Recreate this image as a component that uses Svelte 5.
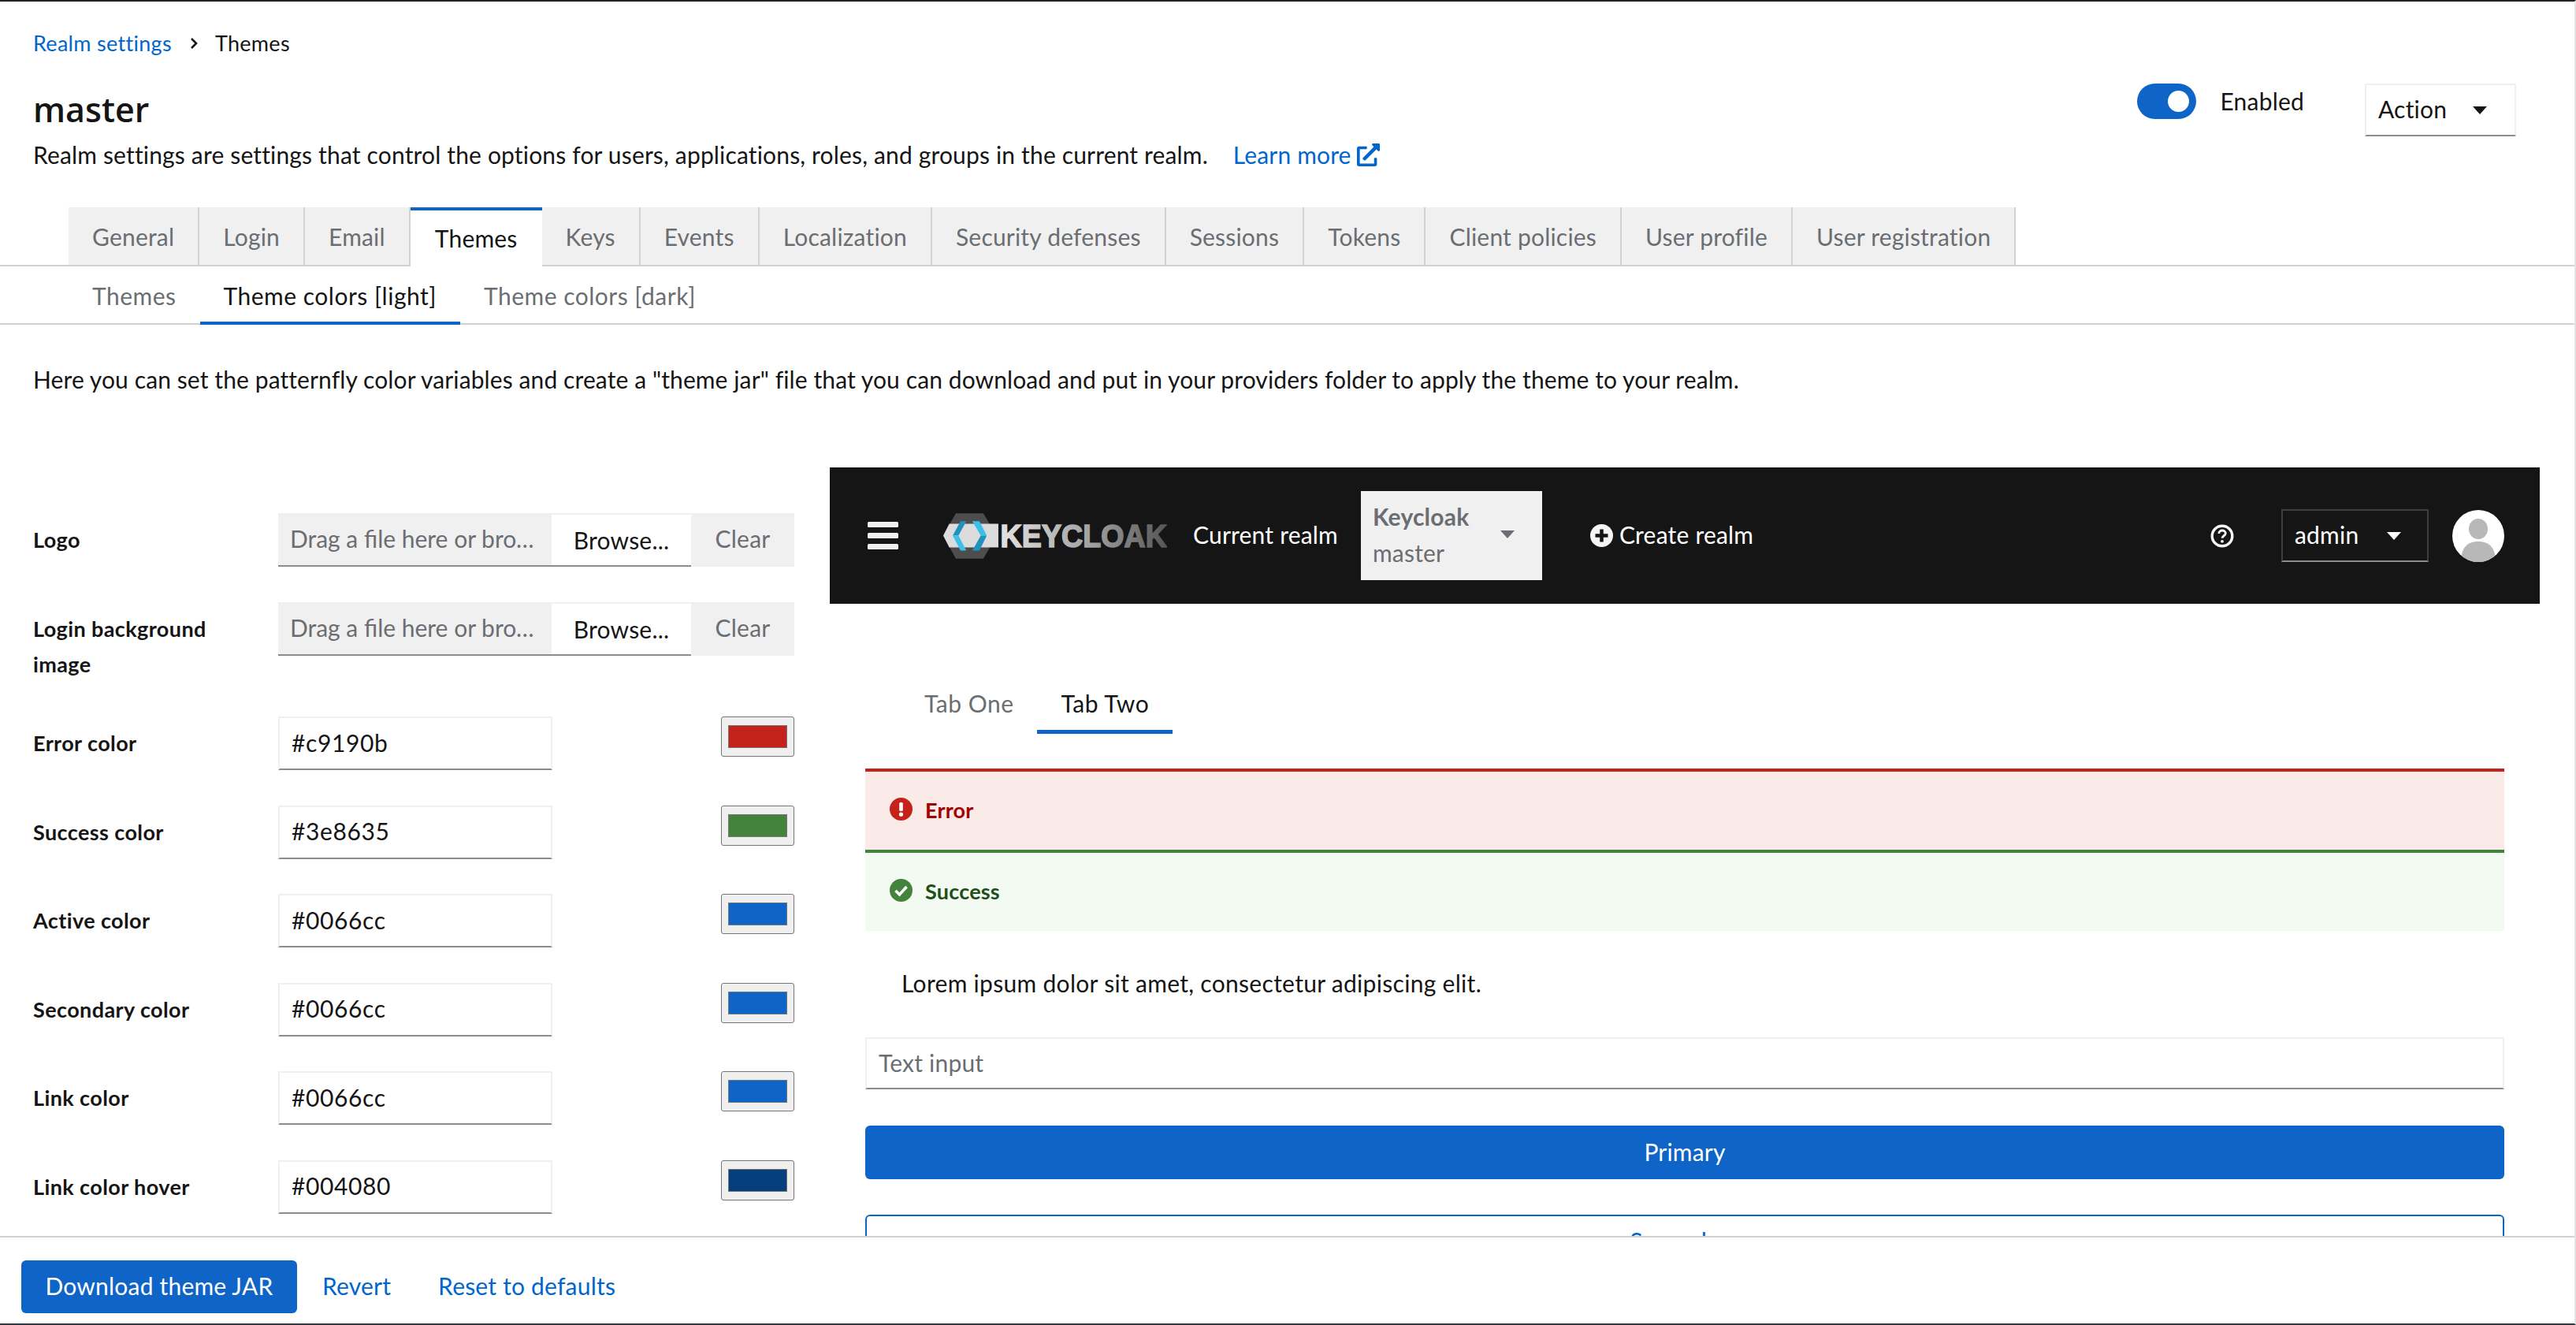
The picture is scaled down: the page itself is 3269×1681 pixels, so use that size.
<script lang="ts">
    const mainTabs = ['General', 'Login', 'Email', 'Themes', 'Keys', 'Events', 'Localization', 'Security defenses', 'Sessions', 'Tokens', 'Client policies', 'User profile', 'User registration']
    const subTabs = ['Themes', 'Theme colors [light]', 'Theme colors [dark]']
    const colors = [
        { label: 'Error color', value: '#c9190b', shown: '#c4221a' },
        { label: 'Success color', value: '#3e8635', shown: '#43833c' },
        { label: 'Active color', value: '#0066cc', shown: '#0e65c7' },
        { label: 'Secondary color', value: '#0066cc', shown: '#0e65c7' },
        { label: 'Link color', value: '#0066cc', shown: '#0e65c7' },
        { label: 'Link color hover', value: '#004080', shown: '#053f7c' },
    ]
    const uploads = ['Logo', 'Login background image']
</script>

<div class="page">
    <main class="content">
        <header class="page-head">
            <div>
                <nav class="crumbs">
                    <a href="#realm">Realm settings</a>
                    <svg class="chev" viewBox="0 0 10 14"><path d="M2 1l6 6-6 6" fill="none" stroke="#151515" stroke-width="2.6" /></svg>
                    <span>Themes</span>
                </nav>
                <h1>master</h1>
                <p class="desc">
                    Realm settings are settings that control the options for users, applications, roles, and groups in the current realm.
                    <a class="learn" href="#learn">Learn more
                        <svg viewBox="0 0 512 512"><path fill="#0066cc" d="M432,320H400a16,16,0,0,0-16,16V448H64V128H208a16,16,0,0,0,16-16V80a16,16,0,0,0-16-16H48A48,48,0,0,0,0,112V464a48,48,0,0,0,48,48H400a48,48,0,0,0,48-48V336A16,16,0,0,0,432,320ZM488,0h-128c-21.37,0-32.05,25.91-17,41l35.73,35.73L135,320.37a24,24,0,0,0,0,34L157.67,377a24,24,0,0,0,34,0L435.28,133.32,471,169c15,15,41,4.5,41-17V24A24,24,0,0,0,488,0Z" /></svg>
                    </a>
                </p>
            </div>
            <div class="head-actions">
                <div class="switch"><span class="track"><span class="knob"></span></span><span class="switch-label">Enabled</span></div>
                <button type="button" class="action"><span class="lift">Action</span> <span class="caret dark"></span></button>
            </div>
        </header>

        <div class="tabs">
            {#each mainTabs as tab (tab)}
                <div class="tab" class:current={tab === 'Themes'}>{tab}</div>
            {/each}
        </div>
        <div class="subtabs">
            {#each subTabs as tab, i (tab)}
                <div class="subtab" class:current={i === 1}>{tab}</div>
            {/each}
        </div>

        <p class="intro">Here you can set the patternfly color variables and create a "theme jar" file that you can download and put in your providers folder to apply the theme to your realm.</p>

        <div class="columns">
            <form class="fields">
                {#each uploads as label (label)}
                    <div class="label">{label}</div>
                    <div class="upload">
                        <span class="drop">Drag a file here or browse to upload</span>
                        <span class="browse">Browse...</span>
                        <span class="clear">Clear</span>
                    </div>
                {/each}
                {#each colors as color, i (i)}
                    <div class="label">{color.label}</div>
                    <div class="color-row">
                        <input class="hex" type="text" value={color.value} />
                        <input class="swatch" type="color" value={color.shown} />
                    </div>
                {/each}
            </form>

            <section class="preview">
                <div class="masthead">
                    <svg class="burger" viewBox="0 0 39 35"><rect width="39" height="7" rx="1.5" fill="#f0f0f0" /><rect y="14" width="39" height="7" rx="1.5" fill="#f0f0f0" /><rect y="28" width="39" height="7" rx="1.5" fill="#f0f0f0" /></svg>
                    <svg class="logo" viewBox="52 70 853 173">
                        <defs>
                            <linearGradient id="kc-text" x1="0" x2="1" y1="0" y2="0"><stop offset="0" stop-color="#e2e2e2" /><stop offset="0.55" stop-color="#a0a0a0" /><stop offset="1" stop-color="#555" /></linearGradient>
                        </defs>
                        <polygon points="100,70 205,70 255,155 205,243 100,243 52,155" fill="#4d4d4d" />
                        <polygon points="52,155 75,110 262,110 262,200 75,200" fill="#dcdcdc" />
                        <polygon points="118,100 140,100 110,155 88,155" fill="#1f93bb" />
                        <polygon points="88,155 110,155 140,212 118,212" fill="#3bc0ea" />
                        <polygon points="163,100 190,100 218,155 195,155" fill="#3bc0ea" />
                        <polygon points="195,155 218,155 190,212 163,212" fill="#1f93bb" />
                        <text x="270" y="200" textLength="635" lengthAdjust="spacingAndGlyphs" font-size="123" font-weight="700" font-family="Liberation Sans, sans-serif" stroke="url(#kc-text)" stroke-width="5" fill="url(#kc-text)">KEYCLOAK</text>
                    </svg>
                    <span class="current-realm lift">Current realm</span>
                    <div class="realm-select">
                        <div><div class="realm-name">Keycloak</div><div class="realm-sub">master</div></div>
                        <span class="caret gray"></span>
                    </div>
                    <span class="create">
                        <svg viewBox="0 0 29 29"><circle cx="14.5" cy="14.5" r="14.5" fill="#f5f5f5" /><path d="M14.5 6.5v16M6.5 14.5h16" stroke="#151515" stroke-width="4.5" /></svg>
                        <span class="lift">Create realm</span>
                    </span>
                    <svg class="help" viewBox="0 0 30 30"><circle cx="15" cy="15" r="12.8" fill="none" stroke="#f5f5f5" stroke-width="3.4" /><path d="M10.8 12c0-2.6 2-4 4.3-4s4.2 1.4 4.2 3.6c0 3.3-4.2 3-4.2 6.2" fill="none" stroke="#f5f5f5" stroke-width="2.8" /><circle cx="15" cy="21.8" r="1.9" fill="#f5f5f5" /></svg>
                    <div class="user"><span class="lift">admin</span><span class="caret white"></span></div>
                    <svg class="avatar" viewBox="0 0 66 66">
                        <clipPath id="av"><circle cx="33" cy="33" r="33" /></clipPath>
                        <g clip-path="url(#av)">
                            <rect width="66" height="66" fill="#fff" />
                            <ellipse cx="33" cy="24" rx="12" ry="13" fill="#b8b8b8" />
                            <path d="M11 66c0-17 7-26 22-26s22 9 22 26z" fill="#b8b8b8" />
                        </g>
                    </svg>
                </div>

                <div class="body">
                    <div class="demo-tabs">
                        <div class="demo-tab">Tab One</div>
                        <div class="demo-tab current">Tab Two</div>
                    </div>
                    <div class="alert error">
                        <svg viewBox="0 0 29 29"><circle cx="14.5" cy="14.5" r="14.5" fill="#c4221a" /><rect x="12.2" y="6" width="4.6" height="11" rx="1.5" fill="#fff" /><circle cx="14.5" cy="21.2" r="2.6" fill="#fff" /></svg>
                        <span class="lift">Error</span>
                    </div>
                    <div class="alert success">
                        <svg viewBox="0 0 29 29"><circle cx="14.5" cy="14.5" r="14.5" fill="#43833c" /><path d="M7.5 15l5 5 9-10" fill="none" stroke="#fff" stroke-width="3.6" /></svg>
                        <span class="lift">Success</span>
                    </div>
                    <p class="lorem">Lorem ipsum dolor sit amet, consectetur adipiscing elit.</p>
                    <input class="text-input" type="text" placeholder="Text input" />
                    <button type="button" class="btn-primary wide">Primary</button>
                    <button type="button" class="btn-secondary wide">Secondary</button>
                </div>
            </section>
        </div>
    </main>

    <footer class="actions">
        <button type="button" class="btn-primary download">Download theme JAR</button>
        <a class="revert" href="#revert">Revert</a>
        <a class="reset" href="#reset">Reset to defaults</a>
    </footer>
</div>

<style>
    :global(body) {
        margin: 0;
        background: #fff;
    }

    .page {
        box-sizing: border-box;
        height: 1681px;
        width: 3269px;
        display: flex;
        flex-direction: column;
        border-top: 2px solid #1f2226;
        border-bottom: 2px solid #2e3b44;
        border-right: 2px solid #e4e4e4;
        font-family: Lato, "Liberation Sans", sans-serif;
        font-size: 30px;
        letter-spacing: 0.2px;
        color: #151515;
        overflow: hidden;
    }

    a {
        color: #0066cc;
        text-decoration: none;
    }

    input,
    button {
        letter-spacing: inherit;
    }

    /* Lato sits a touch lower than the reference face */
    .lift {
        margin-bottom: 3px;
    }

    .content {
        flex: 1;
        min-height: 0;
        overflow: hidden;
    }

    .page-head {
        display: flex;
        justify-content: space-between;
        padding: 33px 74px 0 42px;
    }

    .crumbs {
        display: flex;
        align-items: center;
        font-size: 27px;
        letter-spacing: 0.3px;
        line-height: 40px;
    }

    .chev {
        width: 10px;
        height: 14px;
        margin: 0 22px 0 23px;
    }

    h1 {
        margin: 34px 0 0;
        font-family: "Open Sans", Lato, sans-serif;
        font-size: 43px;
        font-weight: 600;
        letter-spacing: 0;
        line-height: 60px;
    }

    .desc {
        margin: 2px 0 0;
        letter-spacing: 0.16px;
        line-height: 50px;
    }

    .learn {
        margin-left: 24px;
    }

    .learn svg {
        width: 29px;
        height: 29px;
        vertical-align: -3px;
    }

    .head-actions {
        display: flex;
        align-items: flex-start;
        padding-top: 71px;
    }

    .switch {
        display: flex;
        align-items: center;
        gap: 31px;
        margin-right: 77px;
    }

    .track {
        display: block;
        position: relative;
        width: 75px;
        height: 45px;
        border-radius: 23px;
        background: #0e65c7;
    }

    .knob {
        position: absolute;
        right: 9px;
        top: 9px;
        width: 27px;
        height: 27px;
        border-radius: 50%;
        background: #fff;
    }

    .switch-label {
        line-height: 45px;
    }

    .action {
        box-sizing: border-box;
        width: 192px;
        height: 67px;
        padding: 0 15px;
        display: flex;
        align-items: center;
        justify-content: space-between;
        font: inherit;
        color: #151515;
        background: #fff;
        border: 2px solid #f0f0f0;
        border-bottom-color: #8a8d90;
    }

    .action .caret {
        margin-right: 20px;
    }

    .caret {
        display: inline-block;
        width: 0;
        height: 0;
        border-left: 9px solid transparent;
        border-right: 9px solid transparent;
        border-top: 10px solid #151515;
    }

    .caret.gray {
        border-top-color: #6a6e73;
    }

    .caret.white {
        border-top-color: #fff;
    }

    .tabs {
        display: flex;
        box-sizing: border-box;
        margin-top: 42px;
        padding-left: 87px;
        border-bottom: 2px solid #d2d2d2;
        height: 75px;
    }

    .tab {
        padding: 0 30px;
        height: 75px;
        line-height: 74px;
        background: #f0f0f0;
        color: #6a6e73;
        border-right: 2px solid #d2d2d2;
        border-bottom: 2px solid #d2d2d2;
        box-sizing: border-box;
        flex: none;
    }

    .tab.current {
        background: #fff;
        color: #151515;
        border-top: 4px solid #0e65c7;
        border-right: 0;
        border-bottom: 0;
        line-height: 70px;
        padding: 0 31px;
    }

    .subtabs {
        display: flex;
        height: 74px;
        box-sizing: border-box;
        padding-left: 87px;
        border-bottom: 2px solid #d2d2d2;
    }

    .subtab {
        padding: 0 30px;
        letter-spacing: 0.5px;
        line-height: 74px;
        color: #6a6e73;
        height: 74px;
        box-sizing: border-box;
    }

    .subtab.current {
        color: #151515;
        border-bottom: 4px solid #0e65c7;
    }

    .intro {
        margin: 44px 0 0;
        padding-left: 42px;
        letter-spacing: 0.1px;
        line-height: 50px;
    }

    .columns {
        display: flex;
        align-items: flex-start;
        gap: 45px;
        margin-top: 87px;
        padding-left: 42px;
    }

    .fields {
        width: 966px;
        flex: none;
        display: grid;
        grid-template-columns: 311px 655px;
        row-gap: 44.5px;
        padding-top: 58px;
    }

    .label {
        padding: 11px 30px 0 0;
        font-size: 27px;
        font-weight: 700;
        letter-spacing: 0.4px;
        line-height: 45px;
    }

    .upload {
        display: flex;
        height: 68px;
        box-sizing: border-box;
        align-items: stretch;
        line-height: 64px;
    }

    .drop {
        width: 347px;
        box-sizing: border-box;
        padding: 0 15px;
        background: #f0f0f0;
        color: #6a6e73;
        border-bottom: 2px solid #8a8d90;
        letter-spacing: 0;
        white-space: nowrap;
        overflow: hidden;
        text-overflow: ellipsis;
    }

    .browse {
        width: 177px;
        text-align: center;
        box-sizing: border-box;
        border-top: 2px solid #f0f0f0;
        border-bottom: 2px solid #8a8d90;
    }

    .clear {
        flex: 1;
        text-align: center;
        background: #f0f0f0;
        color: #6a6e73;
    }

    .color-row {
        display: flex;
        justify-content: space-between;
        align-items: flex-start;
    }

    .hex {
        box-sizing: border-box;
        width: 348px;
        height: 68px;
        padding: 0 15px 3px;
        font: inherit;
        letter-spacing: 0.6px;
        color: #151515;
        border: 2px solid #f0f0f0;
        border-bottom-color: #8a8d90;
        outline: none;
    }

    .swatch {
        width: 93px;
        height: 51px;
        padding: 0;
        margin: 0;
        box-sizing: border-box;
        background: #efefef;
        border: 1px solid #767676;
        border-radius: 3px;
    }

    .swatch::-webkit-color-swatch-wrapper {
        padding: 10px 8px;
    }

    .swatch::-webkit-color-swatch {
        border: 1px solid #767676;
    }

    .preview {
        width: 2170px;
        flex: none;
    }

    .masthead {
        display: flex;
        align-items: center;
        height: 173px;
        background: #151515;
        color: #fff;
        padding-left: 48px;
    }

    .burger {
        width: 39px;
        height: 35px;
        flex: none;
    }

    .logo {
        width: 284px;
        height: 58px;
        flex: none;
        margin-left: 57px;
    }

    .current-realm {
        margin-left: 33px;
    }

    .realm-select {
        box-sizing: border-box;
        width: 230px;
        height: 113px;
        margin-left: 29px;
        padding: 0 35px 4px 15px;
        display: flex;
        justify-content: space-between;
        align-items: center;
        background: #f0f0f0;
        color: #6a6e73;
        line-height: 46px;
    }

    .realm-name {
        font-weight: 700;
    }

    .create {
        display: flex;
        align-items: center;
        gap: 8px;
        margin-left: 61px;
    }

    .create svg {
        width: 29px;
        height: 29px;
    }

    .help {
        width: 30px;
        height: 30px;
        margin-left: auto;
    }

    .user {
        box-sizing: border-box;
        width: 187px;
        height: 67px;
        margin-left: 60px;
        padding: 0 15px;
        display: flex;
        align-items: center;
        justify-content: space-between;
        border: 2px solid #3c3f42;
        border-bottom-color: #8a8d90;
    }

    .user .caret {
        margin-right: 18px;
    }

    .avatar {
        width: 66px;
        height: 66px;
        margin: 0 45px 0 30px;
    }

    .body {
        padding: 91px 45px 0;
        display: flex;
        flex-direction: column;
    }

    .demo-tabs {
        display: flex;
        margin-left: 45px;
    }

    .demo-tab {
        padding: 0 30px;
        height: 74px;
        box-sizing: border-box;
        letter-spacing: 0.5px;
        line-height: 70px;
        color: #6a6e73;
    }

    .demo-tab.current {
        color: #151515;
        border-bottom: 5px solid #0e65c7;
    }

    .alert {
        display: flex;
        align-items: center;
        gap: 16px;
        height: 103px;
        box-sizing: border-box;
        padding-left: 31px;
        font-size: 27px;
        font-weight: 700;
    }

    .alert svg {
        width: 29px;
        height: 29px;
        margin-bottom: 5px;
    }

    .alert.error {
        margin-top: 44px;
        background: #faeae8;
        color: #a30000;
        border-top: 4px solid #c4221a;
    }

    .alert.success {
        background: #f3faf2;
        color: #1e4f18;
        border-top: 4px solid #43833c;
    }

    .lorem {
        margin: 41px 0 0 46px;
        letter-spacing: 0.3px;
        line-height: 50px;
    }

    .text-input {
        box-sizing: border-box;
        height: 66px;
        margin-top: 44px;
        padding: 0 15px 3px;
        font: inherit;
        border: 2px solid #f0f0f0;
        border-bottom-color: #8a8d90;
    }

    .text-input::placeholder {
        color: #6a6e73;
        opacity: 1;
    }

    .btn-primary {
        font: inherit;
        color: #fff;
        background: #0e65c7;
        border: 0;
        border-radius: 6px;
        padding: 0 0 3px;
    }

    .wide {
        height: 68px;
        flex: none;
    }

    .btn-primary.wide {
        margin-top: 46px;
    }

    .btn-secondary {
        margin-top: 45px;
        font: inherit;
        color: #0066cc;
        background: #fff;
        border: 2px solid #0e65c7;
        border-radius: 6px;
        padding: 0 0 3px;
    }

    .actions {
        flex: none;
        height: 111px;
        box-sizing: border-box;
        display: flex;
        align-items: flex-start;
        padding: 29px 0 0 27px;
        line-height: 64px;
        background: #fff;
        border-top: 2px solid #d2d2d2;
    }

    .download {
        width: 350px;
        height: 67px;
    }

    .revert {
        margin-left: 32px;
    }

    .reset {
        margin-left: 60px;
    }
</style>
